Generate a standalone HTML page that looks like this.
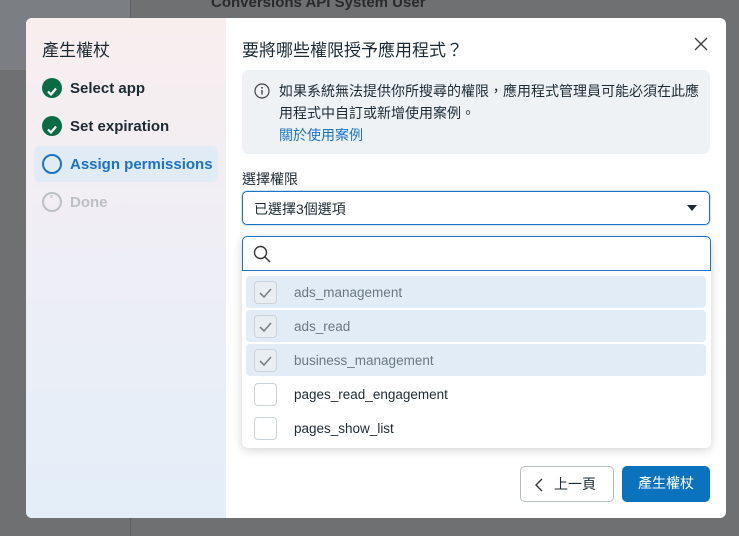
<!DOCTYPE html>
<html><head><meta charset="utf-8"><style>
*{box-sizing:border-box;margin:0;padding:0}
body{width:739px;height:536px;overflow:hidden;background:#6f7072;font-family:"Liberation Sans","Noto Sans CJK TC",sans-serif;position:relative}
.bgtop{position:absolute;left:0;top:0;width:130px;height:70px;background:#7b7e82}
.bgline{position:absolute;left:130px;top:0;width:1px;height:536px;background:#5f6062}
.bgt{position:absolute;color:#2a2a2a;font-size:15px;font-weight:bold;left:211px;top:-6px}
.modal{position:absolute;left:26px;top:18px;width:700px;height:500px;background:#fff;border-radius:6px;overflow:hidden}
.side{position:absolute;left:0;top:0;width:200px;height:500px;background:linear-gradient(180deg,#f8eeee 0%,#eeeef6 50%,#e3eef8 100%)}
.side h2{position:absolute;left:16px;top:18px;font-size:17px;font-weight:normal;color:#1c2b33}
.step{position:absolute;left:8px;width:184px;height:36px;border-radius:6px;font-size:15px;font-weight:bold;color:#1c2b33;line-height:38px;padding-left:36px}
.step .ic{position:absolute;left:8px;top:8px;width:20px;height:20px;border-radius:50%}
.done{background:#0a6b45}
.dot{position:absolute;left:50px;width:3px;height:3px;border-radius:50%;background:#d4d4d8}
.main{position:absolute;left:200px;top:0;right:0;height:500px}
.title{position:absolute;left:16px;top:18px;font-size:17px;color:#1c2b33}
.close{position:absolute;right:18px;top:19px}
.info{position:absolute;left:16px;top:52px;width:468px;height:84px;background:#eff2f5;border-radius:6px;padding:10px 8px 0 37px;font-size:14px;line-height:22px;color:#1c2b33}
.info a{color:#1a73c4;text-decoration:none}
.label{position:absolute;left:16px;top:151px;font-size:14px;color:#1c2b33}
.sel{position:absolute;left:16px;top:173px;width:468px;height:34px;border:1px solid #1a73c4;border-radius:5px;box-shadow:0 0 0 1px #cfe3f5;font-size:14px;line-height:34px;padding-left:11px;color:#1c2b33}
.dd{position:absolute;left:16px;top:218px;width:469px;height:212px;background:#fff;border-radius:6px;box-shadow:0 2px 10px rgba(0,0,0,.18)}
.search{position:absolute;left:0;top:0;width:469px;height:35px;border:1px solid #1a73c4;border-radius:5px 5px 0 0}
.opt{position:absolute;left:4px;width:460px;height:32px;border-radius:4px;font-size:13.5px;line-height:34px;padding-left:48px;color:#1c2b33}
.opt.on{background:#e2ecf6;color:#6b7880}
.cb{position:absolute;left:8px;top:5px;width:23px;height:23px;border:1px solid #cbd2d9;border-radius:4px;background:#fff}
.opt.on .cb{background:#e9eef3}
.btn{position:absolute;top:448px;height:36px;border-radius:5px;font-size:14px;line-height:35px;text-align:center}
</style></head><body>
<div class="bgtop"></div><div class="bgline"></div>
<div class="bgt">Conversions API System User</div>
<div class="modal">
 <div class="side">
  <h2>產生權杖</h2>
  <div class="step" style="top:52px"><span class="ic done"><svg width="20" height="20"><path d="M6 10.5l3 3 5-6" stroke="#fff" stroke-width="2.2" fill="none"/></svg></span>Select app</div>
  <div class="dot" style="top:101px;left:24px"></div><div class="dot" style="top:110px;left:24px"></div>
  <div class="step" style="top:90px"><span class="ic done"><svg width="20" height="20"><path d="M6 10.5l3 3 5-6" stroke="#fff" stroke-width="2.2" fill="none"/></svg></span>Set expiration</div>
  <div class="dot" style="top:139px;left:24px"></div>
  <div class="step" style="top:128px;background:#e0ebf5;color:#1a73c4"><span class="ic" style="border:2px solid #1a73c4"></span>Assign permissions</div>
  <div class="dot" style="top:177px;left:24px"></div>
  <div class="step" style="top:166px;color:#bcc0c4"><span class="ic" style="border:2px solid #bcc0c4"></span>Done</div>
 </div>
 <div class="main">
  <div class="title">要將哪些權限授予應用程式？</div>
  <svg class="close" width="14" height="14"><path d="M1 1l12 12M13 1L1 13" stroke="#444" stroke-width="1.4"/></svg>
  <div class="info"><svg style="position:absolute;left:12px;top:13px" width="16" height="16"><circle cx="8" cy="8" r="7" fill="none" stroke="#444" stroke-width="1.2"/><path d="M8 7v4.5" stroke="#444" stroke-width="1.4"/><circle cx="8" cy="4.8" r=".9" fill="#444"/></svg>如果系統無法提供你所搜尋的權限，應用程式管理員可能必須在此應用程式中自訂或新增使用案例。<br><a>關於使用案例</a></div>
  <div class="label">選擇權限</div>
  <div class="sel">已選擇3個選項<svg style="position:absolute;right:12px;top:13px" width="10" height="6"><path d="M0 0h10L5 6z" fill="#1c2b33"/></svg></div>
  <div class="dd">
   <div class="search"><svg style="position:absolute;left:10px;top:8px" width="18" height="18"><circle cx="7.5" cy="7.5" r="6" fill="none" stroke="#333" stroke-width="1.4"/><path d="M12 12l5 5" stroke="#333" stroke-width="1.5"/></svg></div>
   <div class="opt on" style="top:40px"><span class="cb"><svg width="21" height="21"><path d="M5 11l4 4 7-8" stroke="#7a8288" stroke-width="1.6" fill="none"/></svg></span>ads_management</div>
   <div class="opt on" style="top:74px"><span class="cb"><svg width="21" height="21"><path d="M5 11l4 4 7-8" stroke="#7a8288" stroke-width="1.6" fill="none"/></svg></span>ads_read</div>
   <div class="opt on" style="top:108px"><span class="cb"><svg width="21" height="21"><path d="M5 11l4 4 7-8" stroke="#7a8288" stroke-width="1.6" fill="none"/></svg></span>business_management</div>
   <div class="opt" style="top:142px"><span class="cb"></span>pages_read_engagement</div>
   <div class="opt" style="top:176px"><span class="cb"></span>pages_show_list</div>
  </div>
  <div class="btn" style="left:294px;width:94px;border:1px solid #b5bcc3;color:#1c2b33;padding-left:16px"><svg style="position:absolute;left:14px;top:11px" width="8" height="14"><path d="M7 1L1 7l6 6" stroke="#333" stroke-width="1.4" fill="none"/></svg>上一頁</div>
  <div class="btn" style="left:396px;width:88px;background:#0b72be;color:#fff">產生權杖</div>
 </div>
</div>
</body></html>
